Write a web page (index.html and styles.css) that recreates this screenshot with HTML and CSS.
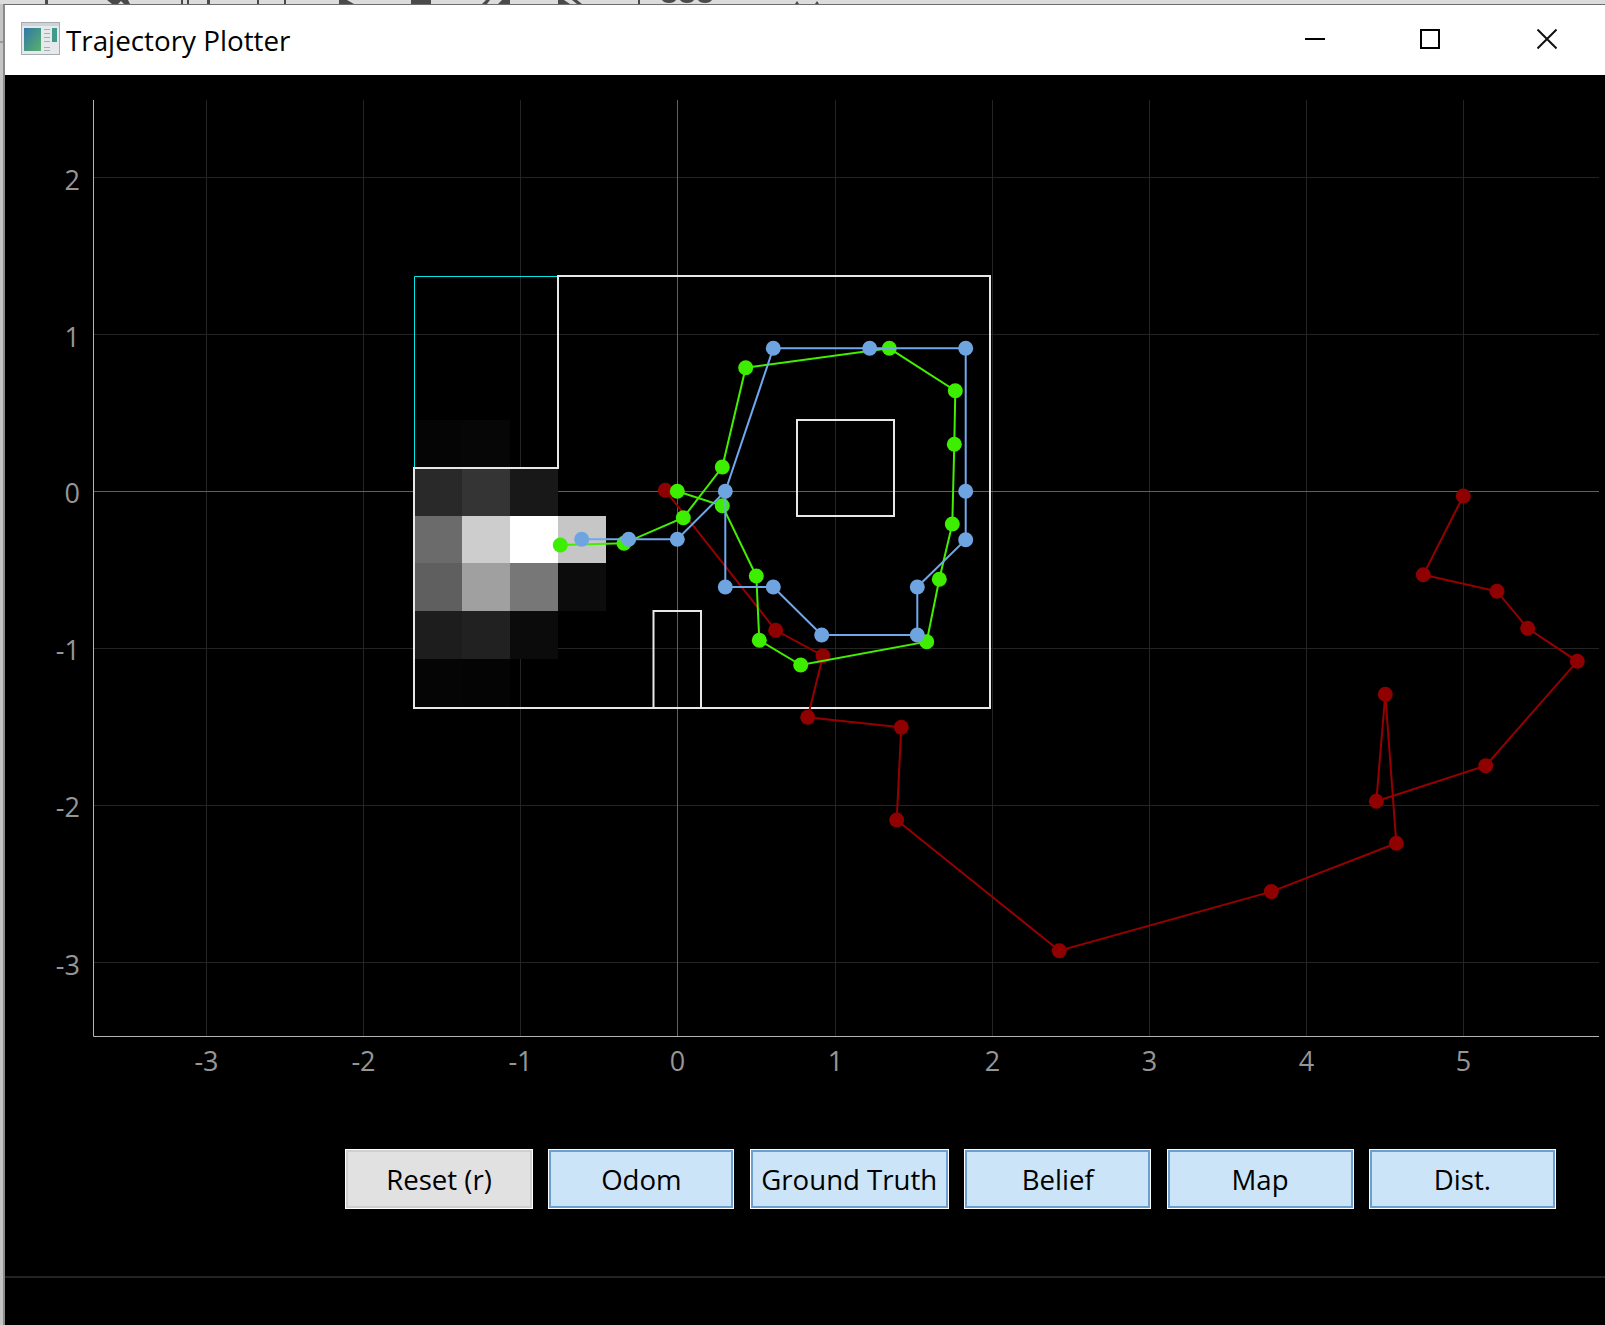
FILE: index.html
```html
<!DOCTYPE html>
<html>
<head>
    <title>Trajectory Plotter</title>
    <link rel="stylesheet" href="styles.css">
</head>
<body>
    <!-- bottom edge of whatever sits behind the window -->
    <svg class="desktop-strip" width="1605" height="4" viewBox="0 0 1605 4">
        <g class="behind">
            <rect x="45" y="0" width="3" height="4"/>
            <path d="M107 0l5 4h6l3-3 3 3h6l-2-4z"/>
            <rect x="181" y="0" width="2" height="4"/>
            <rect x="187" y="0" width="2" height="4"/>
            <rect x="207" y="0" width="3" height="4"/>
            <rect x="257" y="0" width="2" height="4"/>
            <rect x="284" y="0" width="2" height="4"/>
            <path d="M339 0h8l7 4h-15z"/>
            <rect x="411" y="0" width="20" height="4"/>
            <path d="M482 4l4-4h4l-3 4zM498 4l4-4h8v4z"/>
            <path d="M558 0h6l6 4h-12zM572 0h5l5 4h-5z"/>
            <rect x="638" y="0" width="2" height="4"/>
            <path d="M662 0q2 3 7 3t7-3zM680 0q2 3 7 3t7-3zM698 0q2 3 7 3t7-3z"/>
            <path d="M795 4l2-3 2 3zM815 4l2-3 2 3z"/>
        </g>
    </svg>
    <div class="window">
        <div class="titlebar">
            <svg class="app-icon" width="39" height="33" viewBox="0 0 39 33">
                <rect x="0.5" y="0.500" width="38" height="32" fill="#e6e9ec" stroke="#a6abb0"/>
                <rect x="1" y="1" width="37" height="3" fill="#cfd3d7"/>
                <defs>
                    <linearGradient id="pane" x1="0" y1="0" x2="1" y2="1">
                        <stop offset="0" stop-color="#2f78a8"/>
                        <stop offset="1" stop-color="#5bb06a"/>
                    </linearGradient>
                </defs>
                <rect x="3" y="6" width="17" height="23" fill="url(#pane)"/>
                <rect x="31" y="6" width="5" height="14" fill="#3f9a8a"/>
                <path d="M23 7.500h6M23 11.500h6M23 15.500h6M23 19.500h6M23 25.500h6M23 28.500h6" stroke="#a8adb2" stroke-width="1"/>
            </svg>
            <span class="title">Trajectory Plotter</span>
            <div class="window-controls">
                <svg class="win-btn" width="20" height="20" viewBox="0 0 20 20"><path d="M0 10h20" stroke="#000" stroke-width="2"/></svg>
                <svg class="win-btn" width="20" height="20" viewBox="0 0 20 20"><rect x="1" y="1" width="18" height="18" fill="none" stroke="#000" stroke-width="2"/></svg>
                <svg class="win-btn win-close" width="20" height="20" viewBox="0 0 20 20"><path d="M0.500 0.500l19 19M19.500 0.500l-19 19" stroke="#111" stroke-width="2"/></svg>
            </div>
        </div>
        <div class="content">
            <svg class="plot" width="1600" height="1050" viewBox="5 75 1600 1050">
                <g class="grid">
                    <path d="M206.500 100V1036M363.500 100V1036M520.500 100V1036M835.500 100V1036M992.500 100V1036M1149.500 100V1036M1306.500 100V1036M1463.500 100V1036"/>
                    <path d="M93 177.500H1599M93 334.500H1599M93 648.500H1599M93 805.500H1599M93 962.500H1599"/>
                </g>
                <g class="grid-zero">
                    <path d="M677.500 100V1036M93 491.500H1599"/>
                </g>
                <path class="axis" d="M93.500 100V1036.500H1599"/>

                <g class="tick-x">
                    <text x="206.500" y="1071">-3</text>
                    <text x="363.500" y="1071">-2</text>
                    <text x="520.500" y="1071">-1</text>
                    <text x="677.500" y="1071">0</text>
                    <text x="835.500" y="1071">1</text>
                    <text x="992.500" y="1071">2</text>
                    <text x="1149.500" y="1071">3</text>
                    <text x="1306.500" y="1071">4</text>
                    <text x="1463.500" y="1071">5</text>
                </g>
                <g class="tick-y">
                    <text x="80" y="190">2</text>
                    <text x="80" y="347">1</text>
                    <text x="80" y="503">0</text>
                    <text x="80" y="660">-1</text>
                    <text x="80" y="817">-2</text>
                    <text x="80" y="975">-3</text>
                </g>

                <!-- belief grid -->
                <g shape-rendering="crispEdges">
                    <rect x="414" y="420" width="48" height="48" fill="#050505"/>
                    <rect x="462" y="420" width="48" height="48" fill="#060606"/>
                    <rect x="414" y="468" width="48" height="48" fill="#292929"/>
                    <rect x="462" y="468" width="48" height="48" fill="#343434"/>
                    <rect x="510" y="468" width="48" height="48" fill="#181818"/>
                    <rect x="414" y="516" width="48" height="47" fill="#6b6b6b"/>
                    <rect x="462" y="516" width="48" height="47" fill="#cdcdcd"/>
                    <rect x="510" y="516" width="48" height="47" fill="#ffffff"/>
                    <rect x="558" y="516" width="48" height="47" fill="#c6c6c6"/>
                    <rect x="414" y="563" width="48" height="48" fill="#5f5f5f"/>
                    <rect x="462" y="563" width="48" height="48" fill="#a0a0a0"/>
                    <rect x="510" y="563" width="48" height="48" fill="#777777"/>
                    <rect x="558" y="563" width="48" height="48" fill="#0c0c0c"/>
                    <rect x="414" y="611" width="48" height="48" fill="#1d1d1d"/>
                    <rect x="462" y="611" width="48" height="48" fill="#212121"/>
                    <rect x="510" y="611" width="48" height="48" fill="#0b0b0b"/>
                    <rect x="414" y="659" width="48" height="48" fill="#050505"/>
                    <rect x="462" y="659" width="48" height="48" fill="#040404"/>
                </g>

                <!-- map -->
                <path class="map-open" d="M414.500 467V276.500H558"/>
                <path class="map-wall" d="M414 468H558V276H990V708H414Z"/>
                <rect class="map-wall" x="797" y="420" width="97" height="96"/>
                <path class="map-wall" d="M653.500 708V611H701V708"/>

                <!-- odom -->
                <polyline class="track odom" points="665.300,490.300 775.700,630.300 823,655.700 807.700,717.300 901.300,727.300 896.700,820 1059.300,950.700 1271.300,891.600 1396.300,843.300 1385.300,694.300 1376.300,801.300 1485.700,765.700 1577.300,661.300 1527.700,628.300 1497,591.300 1423.300,574.700 1463.300,496"/>
                <g class="dots odom">
                    <circle cx="665.300" cy="490.300" r="7.500"/><circle cx="775.700" cy="630.300" r="7.500"/><circle cx="823" cy="655.700" r="7.500"/><circle cx="807.700" cy="717.300" r="7.500"/><circle cx="901.300" cy="727.300" r="7.500"/><circle cx="896.700" cy="820" r="7.500"/><circle cx="1059.300" cy="950.700" r="7.500"/><circle cx="1271.300" cy="891.600" r="7.500"/><circle cx="1396.300" cy="843.300" r="7.500"/><circle cx="1385.300" cy="694.300" r="7.500"/><circle cx="1376.300" cy="801.300" r="7.500"/><circle cx="1485.700" cy="765.700" r="7.500"/><circle cx="1577.300" cy="661.300" r="7.500"/><circle cx="1527.700" cy="628.300" r="7.500"/><circle cx="1497" cy="591.300" r="7.500"/><circle cx="1423.300" cy="574.700" r="7.500"/><circle cx="1463.300" cy="496" r="7.500"/>
                </g>

                <!-- ground truth -->
                <polyline class="track truth" points="560.300,545 624,543.300 683.300,517.700 722.300,467 745.700,367.700 889.300,348.300 955.300,390.700 954.300,444.300 952.300,524 939.300,579.300 926.700,641.700 800.700,665 759.300,640.300 756.300,576 722.300,505.700 677.300,491.300"/>
                <g class="dots truth">
                    <circle cx="560.300" cy="545" r="7.500"/><circle cx="624" cy="543.300" r="7.500"/><circle cx="683.300" cy="517.700" r="7.500"/><circle cx="722.300" cy="467" r="7.500"/><circle cx="745.700" cy="367.700" r="7.500"/><circle cx="889.300" cy="348.300" r="7.500"/><circle cx="955.300" cy="390.700" r="7.500"/><circle cx="954.300" cy="444.300" r="7.500"/><circle cx="952.300" cy="524" r="7.500"/><circle cx="939.300" cy="579.300" r="7.500"/><circle cx="926.700" cy="641.700" r="7.500"/><circle cx="800.700" cy="665" r="7.500"/><circle cx="759.300" cy="640.300" r="7.500"/><circle cx="756.300" cy="576" r="7.500"/><circle cx="722.300" cy="505.700" r="7.500"/><circle cx="677.300" cy="491.300" r="7.500"/>
                </g>

                <!-- belief -->
                <polyline class="track belief" points="581.700,539.300 628.700,539.300 677.300,539.300 725.300,491.300 773.300,348.300 869.700,348.300 965.700,348.300 965.700,491.300 965.700,539.700 917.300,587 917.300,635 821.700,635 773.300,587 725.300,587 725.300,491.300"/>
                <g class="dots belief">
                    <circle cx="581.700" cy="539.300" r="7.500"/><circle cx="628.700" cy="539.300" r="7.500"/><circle cx="677.300" cy="539.300" r="7.500"/><circle cx="725.300" cy="491.300" r="7.500"/><circle cx="773.300" cy="348.300" r="7.500"/><circle cx="869.700" cy="348.300" r="7.500"/><circle cx="965.700" cy="348.300" r="7.500"/><circle cx="965.700" cy="491.300" r="7.500"/><circle cx="965.700" cy="539.700" r="7.500"/><circle cx="917.300" cy="587" r="7.500"/><circle cx="917.300" cy="635" r="7.500"/><circle cx="821.700" cy="635" r="7.500"/><circle cx="773.300" cy="587" r="7.500"/><circle cx="725.300" cy="587" r="7.500"/>
                </g>
            </svg>
            <div class="button-row">
                <button class="btn btn-plain">Reset (r)</button>
                <button class="btn btn-narrow">Odom</button>
                <button class="btn btn-wide">Ground Truth</button>
                <button class="btn">Belief</button>
                <button class="btn">Map</button>
                <button class="btn">Dist.</button>
            </div>
            <div class="status-line"></div>
        </div>
    </div>
</body>
</html>
```

FILE: styles.css
```css
html, body {
    margin: 0;
    height: 100%;
}

body {
    width: 1605px;
    height: 1325px;
    overflow: hidden;
    background: linear-gradient(#9a9a9a, #9a9a9a) 0 41px / 3px 2px no-repeat, #c4c4c4;
    font-family: 'Open Sans', sans-serif;
}

.desktop-strip {
    display: block;
    background-color: #dcdcdc;
}

.behind {
    fill: #4a4a4a;
}

.window {
    height: 1321px;
    margin-left: 3px;
    border-top: 1px solid #6e6e6e;
    border-left: 2px solid #8a8a8a;
    box-sizing: border-box;
    background-color: #000;
}

.titlebar {
    display: flex;
    align-items: center;
    height: 70px;
    padding-left: 16px;
    background-color: #fff;
    color: #000;
}

.app-icon {
    margin-right: 6px;
    margin-bottom: 4px;
}

.title {
    font-size: 27.8px;
}

.window-controls {
    display: flex;
    margin-left: auto;
    margin-bottom: 2px;
    gap: 95px;
    padding-right: 48px;
}

.win-close {
    margin-left: 2px;
}

.plot {
    display: block;
}

.grid path {
    fill: none;
    stroke: #242424;
    stroke-width: 1;
}

.grid-zero path {
    fill: none;
    stroke: #606060;
    stroke-width: 1;
}

.axis {
    fill: none;
    stroke: #b4b4b4;
    stroke-width: 1;
}

.tick-x text, .tick-y text {
    fill: #969696;
    font-size: 27px;
    font-family: 'Open Sans', sans-serif;
}

.tick-x text {
    text-anchor: middle;
}

.tick-y text {
    text-anchor: end;
}

.map-open {
    fill: none;
    stroke: #00e8e8;
    stroke-width: 1;
}

.map-wall {
    fill: none;
    stroke: #e8e8e8;
    stroke-width: 2;
}

.track {
    fill: none;
    stroke-width: 2;
}

.track.odom { stroke: #960000; }
.track.truth { stroke: #44ee00; }
.track.belief { stroke: #70a8ee; }

.dots.odom { fill: #8f0000; }
.dots.truth { fill: #3dee00; }
.dots.belief { fill: #6ea5e0; }

.button-row {
    display: flex;
    gap: 15.4px;
    height: 60px;
    margin-top: 24px;
    padding-left: 340px;
}

.btn {
    width: 187px;
    height: 60px;
    box-sizing: border-box;
    padding: 0;
    border: 1px solid #fff;
    box-shadow: inset 0 0 0 2px #6a9fcf;
    background-color: #cce4f7;
    color: #000;
    font-family: 'Open Sans', sans-serif;
    font-size: 27.6px;
}

.btn-narrow {
    width: 186px;
}

.btn-wide {
    width: 199px;
}

.btn-plain {
    width: 188px;
    box-shadow: inset 0 0 0 2px #cfcfcf;
    background-color: #e1e1e1;
}

.status-line {
    height: 2px;
    margin-top: 67px;
    background-color: #222;
}
```
